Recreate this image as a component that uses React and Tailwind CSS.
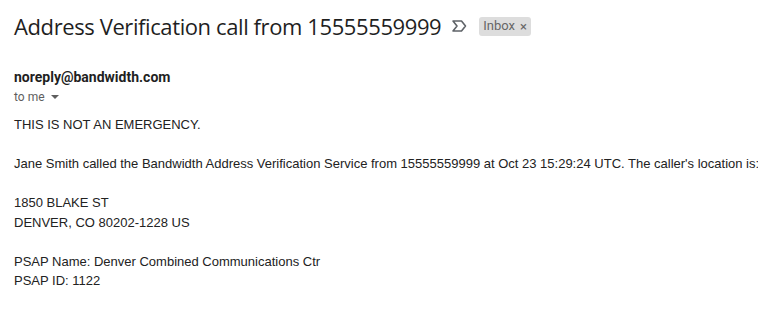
export default function App() {
  return (
    <div className="w-[758px] h-[309px] bg-white overflow-hidden text-[#222]">
      {/* Subject */}
      <div className="flex items-center pl-[14px] pt-[10px] h-[32px] box-content">
        <h2 className="text-[22px] leading-[28px] text-[#1f1f1f] font-['Open_Sans',sans-serif] tracking-[-0.4px]">
          Address Verification call from 15555559999
        </h2>
        <svg className="ml-[10px] w-[16px] h-[16px] text-[#5f6368]" viewBox="0 0 16 16" fill="none">
          <path d="M2 3h8.5l4 5-4 5H2l4-5z" stroke="currentColor" strokeWidth="1.6" strokeLinejoin="round" />
        </svg>
        <span className="ml-[12px] flex items-center gap-[5px] bg-[#dddddd] rounded-[3px] h-[19px] px-[4px] text-[13px] text-[#666] font-['Roboto',sans-serif]">
          Inbox
          <span className="text-[13px] leading-none">×</span>
        </span>
      </div>

      {/* Sender */}
      <div className="pl-[14px] pt-[25px] font-['Roboto',sans-serif]">
        <div className="text-[14px] leading-[20px] font-bold text-[#1f1f1f]">noreply@bandwidth.com</div>
        <div className="flex items-center text-[12px] leading-[20px] text-[#5e5e5e]">
          to me
          <svg className="ml-[5px] w-[10px] h-[10px]" viewBox="0 0 10 10">
            <path d="M1 3h8L5 7z" fill="#5e5e5e" />
          </svg>
        </div>
      </div>

      {/* Body */}
      <div className="pl-[14px] pt-[8px] text-[13px] leading-[19.5px] text-[#222] whitespace-nowrap font-['Liberation_Sans',Arial,sans-serif]">
        <div>THIS IS NOT AN EMERGENCY.</div>
        <br />
        <div>Jane Smith called the Bandwidth Address Verification Service from 15555559999 at Oct 23 15:29:24 UTC. The caller's location is:</div>
        <br />
        <div>1850 BLAKE ST</div>
        <div>DENVER, CO 80202-1228 US</div>
        <br />
        <div>PSAP Name: Denver Combined Communications Ctr</div>
        <div>PSAP ID: 1122</div>
      </div>
    </div>
  )
}
